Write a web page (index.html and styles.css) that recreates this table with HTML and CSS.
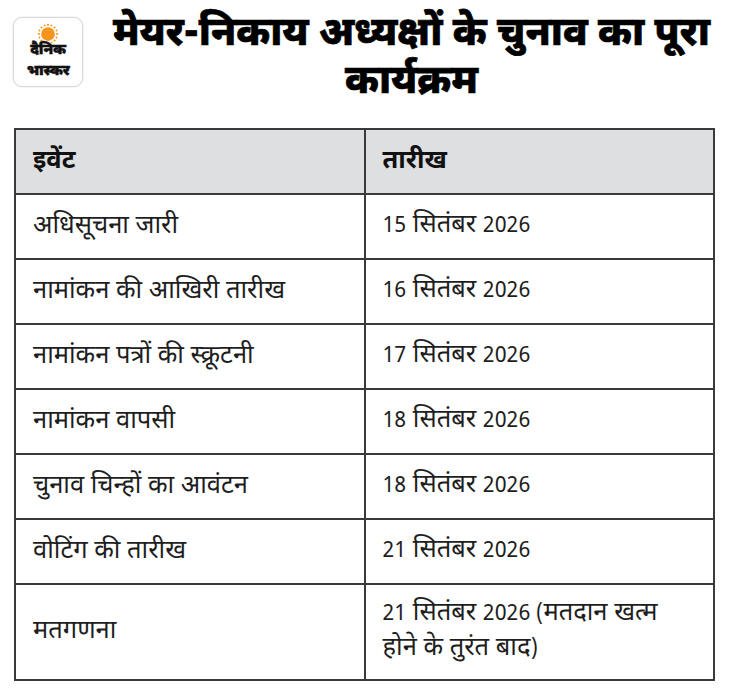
FILE: index.html
```html
<!DOCTYPE html>
<html lang="hi">
<head>
<meta charset="utf-8">
<link rel="stylesheet" href="styles.css">
</head>
<body>
<div class="page">
  <header class="head">
    <div class="logo">
      <svg class="sun" viewBox="0 0 24 24" width="22" height="22">
        <g fill="#f7941d">
          <circle cx="12" cy="12" r="7.5"/>
          <circle cx="12" cy="2" r="1.2"/><circle cx="12" cy="22" r="1.2"/>
          <circle cx="2" cy="12" r="1.2"/><circle cx="22" cy="12" r="1.2"/>
          <circle cx="4.9" cy="4.9" r="1.2"/><circle cx="19.1" cy="19.1" r="1.2"/>
          <circle cx="4.9" cy="19.1" r="1.2"/><circle cx="19.1" cy="4.9" r="1.2"/>
          <circle cx="8.2" cy="2.7" r="1"/><circle cx="15.8" cy="2.7" r="1"/>
          <circle cx="8.2" cy="21.3" r="1"/><circle cx="15.8" cy="21.3" r="1"/>
          <circle cx="2.7" cy="8.2" r="1"/><circle cx="2.7" cy="15.8" r="1"/>
          <circle cx="21.3" cy="8.2" r="1"/><circle cx="21.3" cy="15.8" r="1"/>
        </g>
      </svg>
      <span class="logo-t1">दैनिक</span>
      <span class="logo-t2">भास्कर</span>
    </div>
    <h1 class="title">मेयर-निकाय अध्यक्षों के चुनाव का पूरा कार्यक्रम</h1>
  </header>
  <table class="sched">
    <thead>
      <tr><th>इवेंट</th><th>तारीख</th></tr>
    </thead>
    <tbody>
      <tr><td>अधिसूचना जारी</td><td><span class="num">15</span> सितंबर <span class="num">2026</span></td></tr>
      <tr><td>नामांकन की आखिरी तारीख</td><td><span class="num">16</span> सितंबर <span class="num">2026</span></td></tr>
      <tr><td>नामांकन पत्रों की स्क्रूटनी</td><td><span class="num">17</span> सितंबर <span class="num">2026</span></td></tr>
      <tr><td>नामांकन वापसी</td><td><span class="num">18</span> सितंबर <span class="num">2026</span></td></tr>
      <tr><td>चुनाव चिन्हों का आवंटन</td><td><span class="num">18</span> सितंबर <span class="num">2026</span></td></tr>
      <tr><td>वोटिंग की तारीख</td><td><span class="num">21</span> सितंबर <span class="num">2026</span></td></tr>
      <tr class="tall"><td>मतगणना</td><td class="wrap"><span class="num">21</span> सितंबर <span class="num">2026 (</span>मतदान खत्म<br>होने के तुरंत बाद<span class="num">)</span></td></tr>
    </tbody>
  </table>
</div>
</body>
</html>
```

FILE: styles.css
```css
* { box-sizing: border-box; }
html, body { margin: 0; padding: 0; background: #fff; }
body {
  font-family: "Noto Sans Devanagari", "Noto Sans", "Lohit Devanagari", sans-serif;
  color: #1a1a1a;
}
.page { padding: 0 0 0 14px; width: 730px; }
.head {
  display: flex;
  align-items: flex-start;
  height: 128px;
  padding-top: 17px;
}
.logo {
  width: 70px;
  height: 70px;
  margin-left: -1px;
  border: 1.5px solid #d9d9d9;
  border-radius: 9px;
  box-shadow: 0 0 2px rgba(0,0,0,0.15);
  background: #fff;
  display: flex;
  flex-direction: column;
  align-items: center;
  padding-top: 5px;
  flex: none;
  overflow: hidden;
}
.sun { display: block; flex: none; }
.logo-t1, .logo-t2 {
  font-weight: 900;
  color: #111;
  letter-spacing: -0.3px;
  display: block;
  flex: none;
  font-size: 15px;
  line-height: 22.5px;
  height: 22.5px;
  -webkit-text-stroke: 0.4px #111;
}
.logo-t1 { margin-top: -5px; }
.logo-t2 { margin-top: -2px; }
.title {
  flex: 1;
  margin: 0;
  padding: 0 2px 0 12px;
  text-align: center;
  font-size: 40px;
  font-weight: 800;
  line-height: 48px;
  color: #000;
  margin-top: -6px;
  -webkit-text-stroke: 0.7px #000;
}
.sched {
  border-collapse: collapse;
  width: 701px;
  table-layout: fixed;
  font-size: 25.5px;
}
.sched th, .sched td {
  border: 2px solid #3a3a3a;
  text-align: left;
  padding: 0 16px 0 17px;
  height: 65px;
  vertical-align: middle;
  font-weight: 400;
  line-height: 32px;
  color: #1e1e1e;
}
.num { font-size: 21.5px; }
.sched th {
  background: #dedfe1;
  font-weight: 700;
  color: #111;
}
.sched tr.tall td { height: 96px; }
.sched td.wrap { line-height: 34px; }
```
